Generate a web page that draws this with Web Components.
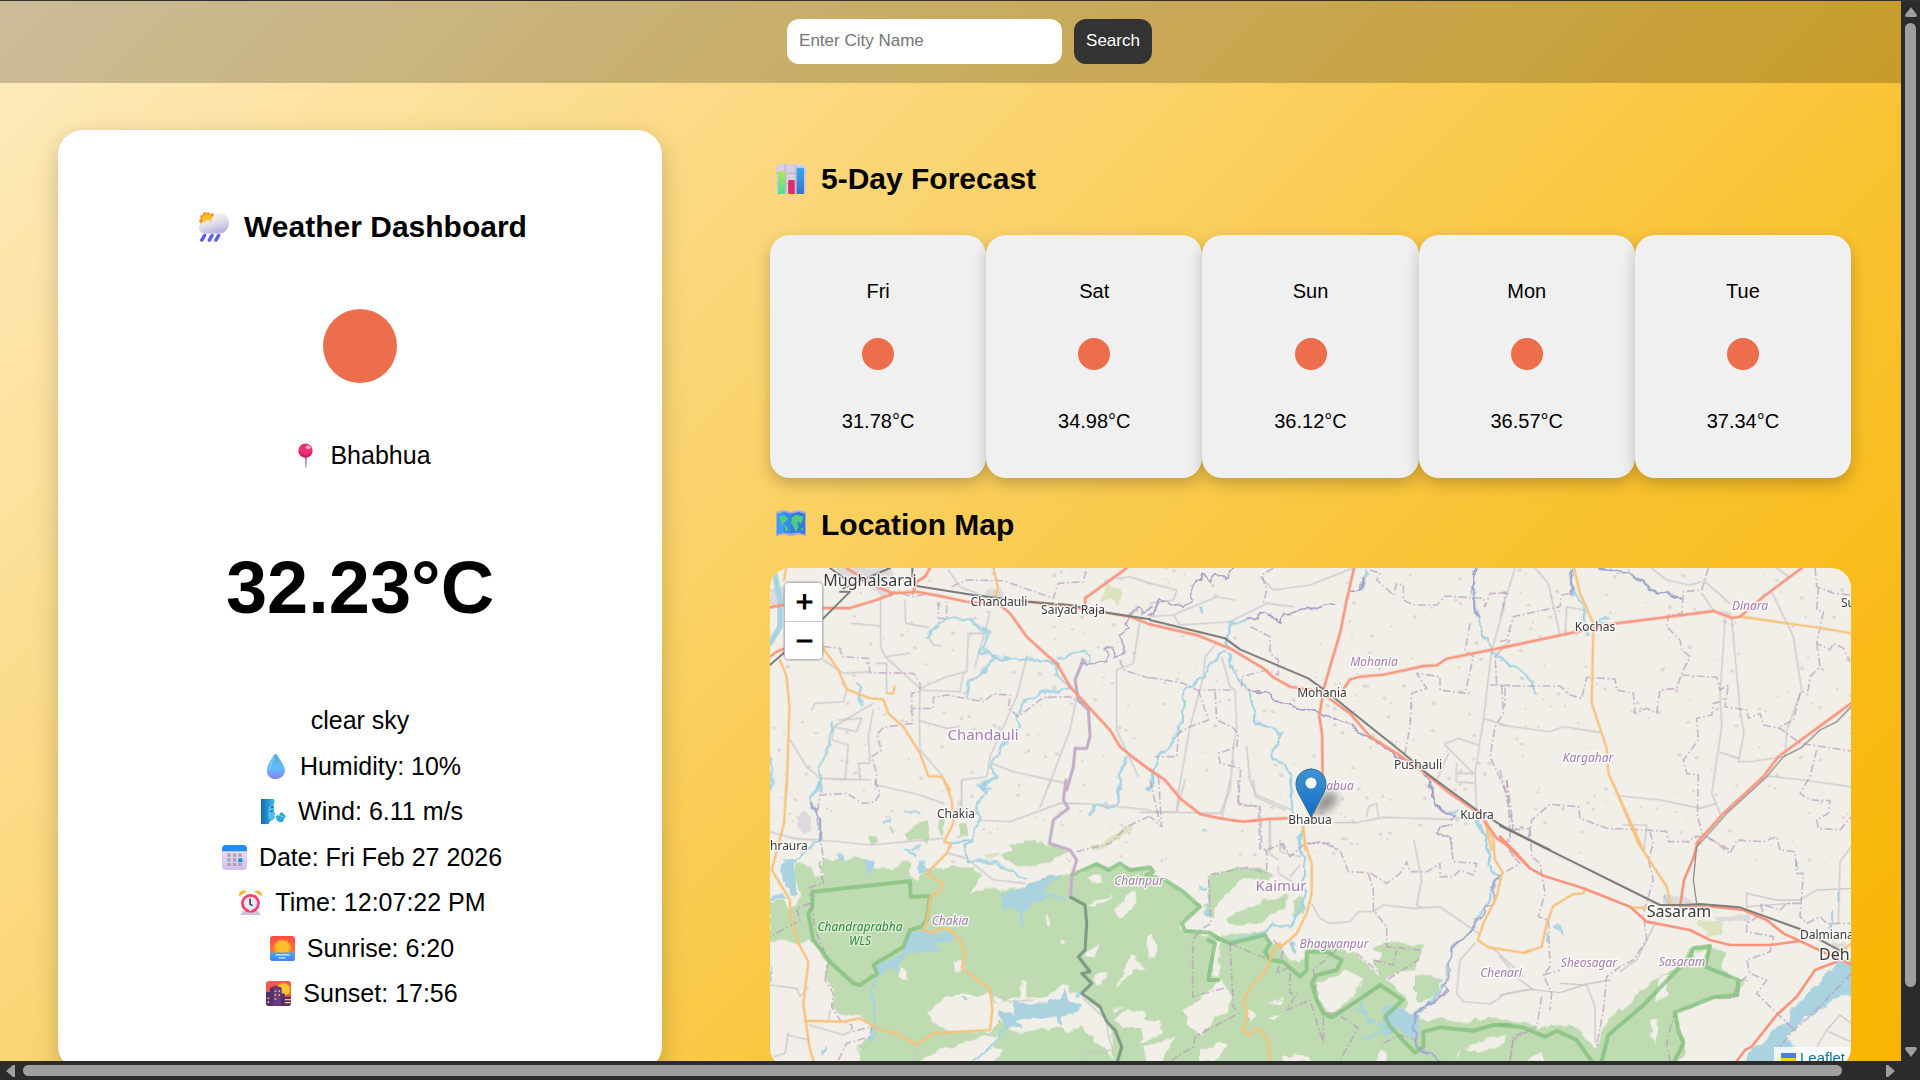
<!DOCTYPE html>
<html lang="en">
<head>
<meta charset="utf-8">
<title>Weather Dashboard</title>
<style>
  html, body { margin: 0; height: 100%; }
  body { font-family: "Liberation Sans", Arial, sans-serif; color: #000; overflow: hidden; }
</style>
</head>
<body>
<scroll-frame>
  <city-search></city-search>
  <weather-layout>
    <weather-card slot="side">
      <section-title slot="title" icon="rain">Weather Dashboard</section-title>
      <metric-row slot="place" icon="pin">Bhabhua</metric-row>
      <span slot="temp">32.23°C</span>
      <metric-row>clear sky</metric-row>
      <metric-row icon="drop">Humidity: 10%</metric-row>
      <metric-row icon="wind">Wind: 6.11 m/s</metric-row>
      <metric-row icon="calendar">Date: Fri Feb 27 2026</metric-row>
      <metric-row icon="clock">Time: 12:07:22 PM</metric-row>
      <metric-row icon="sunrise">Sunrise: 6:20</metric-row>
      <metric-row icon="sunset">Sunset: 17:56</metric-row>
    </weather-card>
    <section-title icon="chart">5-Day Forecast</section-title>
    <forecast-list>
      <forecast-day day="Fri">31.78°C</forecast-day>
      <forecast-day day="Sat">34.98°C</forecast-day>
      <forecast-day day="Sun">36.12°C</forecast-day>
      <forecast-day day="Mon">36.57°C</forecast-day>
      <forecast-day day="Tue">37.34°C</forecast-day>
    </forecast-list>
    <section-title class="map-title" icon="map">Location Map</section-title>
    <location-map></location-map>
  </weather-layout>
</scroll-frame>

<script>
const ICONS = {
  rain: `<defs><linearGradient id="c" x1="0" y1="0" x2="0.4" y2="1"><stop offset="0" stop-color="#fbfafc"/><stop offset=".6" stop-color="#e3e0e9"/><stop offset="1" stop-color="#bcb4e6"/></linearGradient></defs>
    <path d="M10 0l2 2 3-1 1 3 3 1-1 3-1 5H2L0 9l2-2-1-3 3-1 1-3 3 1z" fill="#fb8b24"/><circle cx="9" cy="8" r="6" fill="#fcc01f"/>
    <path d="M7 9c3-1 5 0 6 1 0-5 4-9 9-9s10 4 10 10-3 9-6 11c-2 1-4 1-6 1H7c-4 0-7-3-7-7 0-3 3-6 7-6z" fill="url(#c)"/><path d="M7 9c5 0 8 4 8 9" fill="none" stroke="#d8d5df"/>
    <path d="M6 25l-3 5M14 25l-3 5M21 25l-3 5" stroke="#575df3" stroke-width="3.6" stroke-linecap="round"/>`,
  pin: `<path d="M15 17h3l-1 15h-1z" fill="#9b8fa9"/><circle cx="16" cy="9.500" r="9" fill="#ee2f72"/><path d="M7 10a9 9 0 0 0 18 0c-3 6-12 8-18 0z" fill="#cc1c6b"/><ellipse cx="19.500" cy="5.500" rx="3" ry="2.500" fill="#ffb1cb"/>`,
  drop: `<defs><linearGradient id="d" x1="0" y1="0" x2="0" y2="1"><stop offset="0" stop-color="#58a8e4"/><stop offset=".55" stop-color="#5fbcf7"/><stop offset="1" stop-color="#8483f8"/></linearGradient></defs><path d="M16 0c1 0 2 1 3 3 4 7 9 12 9 18 0 7-6 11-12 11S5 28 5 21C5 15 9 10 13 3c1-2 2-3 3-3z" fill="url(#d)"/><path d="M14 5C11 11 8 15 8 20" fill="none" stroke="#9bdcff" stroke-width="2" stroke-linecap="round" opacity=".6"/>`,
  wind: `<defs><linearGradient id="w"><stop offset="0" stop-color="#1668ad"/><stop offset=".6" stop-color="#2e9fda"/><stop offset="1" stop-color="#4fc4f2"/></linearGradient></defs><path d="M0 0h16c2 1 2 5 0 8l1 5-1 3 3 3-2 2 1 3-3 3c-3 1-4 2-5 5H0z" fill="url(#w)"/><path d="M10 10c4-2 6-1 6 3l1 8-3 5c-3 1-5-1-5-4z" fill="#52bdf0"/><path d="M12 16l4-1M13 11l3-1" stroke="#164e83" stroke-width="1.500"/><path d="M19 22l2-2 2 2 1-4 3-1 3 3 2 2-2 3-2 4-4 1-4-3z" fill="#32a8d6"/><path d="M22 20l4 2 4 1" fill="none" stroke="#7fd9f2"/>`,
  calendar: `<defs><linearGradient id="k" x1="0" y1="0" x2="0" y2="1"><stop offset="0" stop-color="#ebe6f3"/><stop offset="1" stop-color="#d5bdea"/></linearGradient></defs><rect width="32" height="32" rx="5" fill="url(#k)"/><path d="M5 0h22a5 5 0 0 1 5 5v3H0V5a5 5 0 0 1 5-5z" fill="#268cf0"/><path d="M7 11h4v4H7zm7 0h4v4h-4zm7 0h4v4h-4zM7 17h4v4H7zm7 0h4v4h-4zM7 23h4v4H7zm7 0h4v4h-4zm7 0h4v4h-4z" fill="#a49fb0"/><path d="M21 17h5v5h-5z" fill="#0d93ec"/>`,
  clock: `<path d="M6 27h20l3 5H3z" fill="#cfc0df"/><path d="M2 8c-3-5 5-10 9-6zM30 8c3-5-5-10-9-6z" fill="#f9b52c"/><circle cx="16" cy="17" r="12" fill="#f33f6c"/><circle cx="16" cy="17" r="8.500" fill="#eee7f4"/><path d="M15.500 11v7l3 2" fill="none" stroke="#402f4e" stroke-width="2"/><path d="M15 25h2v2h-2z" fill="#fff"/>`,
  sunrise: `<defs><linearGradient id="s" x1="0" y1="0" x2="0" y2="1"><stop offset="0" stop-color="#ff493d"/><stop offset="1" stop-color="#ff8b57"/></linearGradient><linearGradient id="b" x1="0" y1="0" x2="0" y2="1"><stop offset="0" stop-color="#38aef4"/><stop offset="1" stop-color="#4f79f3"/></linearGradient></defs><rect width="32" height="32" rx="4" fill="url(#s)"/><path d="M16 4l3 2 3-1 1 3 3 1v4l2 2-3 6H7l-3-6 2-2V9l3-1 1-3 3 1z" fill="#fba61f"/><circle cx="16" cy="14" r="8" fill="#fbc02a"/><path d="M0 21h32v7a4 4 0 0 1-4 4H4a4 4 0 0 1-4-4z" fill="url(#b)"/><path d="M7 24h18M11 28h9" stroke="#d8ebff" stroke-width="1.600"/>`,
  sunset: `<rect width="32" height="32" rx="4" fill="#ea5a50"/><path d="M21 2l4 0 3 3 3 1v11H14l-1-8 3-5z" fill="#f9951f"/><circle cx="23" cy="11" r="7.500" fill="#fbc62b"/><path d="M0 14h5V9l7-3 8 3v7h4v4h8v8a4 4 0 0 1-4 4H4a4 4 0 0 1-4-4z" fill="#53306d"/><path d="M9 8h10v24H9z" fill="#653c7e"/><path d="M11 12h2v2h-2zm5 0h2v2h-2zm-5 5h2v2h-2zm5 0h2v2h-2zm-5 5h2v2h-2zM2 21h2v2H2zm0 5h2v2H2zM24 23h8v1.500h-8zm0 4h8v1.500h-8z" fill="#ffcf57"/>`,
  chart: `<rect width="32" height="32" rx="5" fill="#d8d0df"/><path d="M10 0v32M21 0v32M0 10h32M0 21h32" stroke="#beb4c7" stroke-width="1.200"/><defs><linearGradient id="g" x1="0" y1="0" x2="0" y2="1"><stop offset="0" stop-color="#aee65b"/><stop offset="1" stop-color="#58dc92"/></linearGradient><linearGradient id="u" x1="0" y1="0" x2="0" y2="1"><stop offset="0" stop-color="#35a9f6"/><stop offset="1" stop-color="#3c72c4"/></linearGradient></defs><path d="M2 9q0-1 1-1h5q2 0 2 1v23H2z" fill="url(#g)"/><path d="M13 18q0-1 1-1h4q2 0 2 1v14h-7z" fill="#e12c72"/><path d="M22 5q0-1 1-1h5q2 0 2 1v27h-8z" fill="url(#u)"/>`,
  map: `<path d="M0 2l8-2 8 2 8-2 8 2v26l-8-2-8 2-8-2-8 2z" fill="#b9a5cf"/><path d="M1 4l7-2 8 2v21l-8-1-7 2z" fill="#3f9cf3"/><path d="M16 4l8-2 7 2v22l-7-2-8 1z" fill="#2f7cda"/><path d="M8 2l8 2v21l-8-1z" fill="#338ae6"/><path d="M4 7l6-1 3 3-3 4-2 1 2 3 3 2-1 4-2-1-1-5-4-4zM17 8l4-3 8 2-1 5-2 3-2-3-1 3 1 4-3 4-2-5-3-4zM26 19l3 1-1 3z" fill="#52ca82"/>`
};
const icon = (name, size, gap) => name
  ? `<svg viewBox="0 0 32 32" width="${size}" height="${size}" style="margin:0 ${gap}px" aria-hidden="true">${ICONS[name]}</svg>` : '';

class BaseElement extends HTMLElement {
  connectedCallback() {
    if (this.shadowRoot) return;
    this.attachShadow({ mode: 'open' }).innerHTML = this.render();
  }
}

/* Window frame: page area plus the two scroll tracks. */
customElements.define('scroll-frame', class extends BaseElement {
  render() { return `<style>
    :host { display: grid; box-sizing: border-box; height: 100vh; grid-template: minmax(0, 1fr) 19px / minmax(0, 1fr) 19px; background: #2b2b2b; border-top: 1px solid #33302f; }
    .page { overflow: hidden; background: linear-gradient(135deg, #feebc0 0%, #fbd981 30%, #f9c437 66%, #f8b400 100%); }
    .v, .h { display: flex; align-items: center; justify-content: space-between; }
    .v { flex-direction: column; padding: 6px 0 4px; }
    .h { padding: 0 6px; }
    .thumb { background: #9f9f9f; border-radius: 6px; }
    .v .thumb { width: 11px; flex: 1; margin: 6px 0 60px; }
    .h .thumb { height: 11px; flex: 1; margin: 0 44px 0 8px; }
    svg { display: block; fill: #9f9f9f; }
    </style>
    <div class="page"><slot></slot></div>
    <div class="v"><svg width="12" height="10"><path d="M6 0l6 8q0 2-2 2H2q-2 0-2-2z"/></svg><div class="thumb"></div><svg width="12" height="10"><path d="M6 10l6-8q0-2-2-2H2q-2 0-2 2z"/></svg></div>
    <div class="h"><svg width="9" height="12"><path d="M0 6l7-6h2v12H7z"/></svg><div class="thumb"></div><svg width="9" height="12"><path d="M9 6L2 0H0v12h2z"/></svg></div>`; }
});

customElements.define('city-search', class extends BaseElement {
  render() { return `<style>
    :host { display: block; background: rgba(0,0,0,.2); }
    form { display: flex; justify-content: center; gap: 12px; margin: 0; padding: 18px 0 19px 38px; }
    input, button { box-sizing: border-box; height: 45px; border: 0; border-radius: 12px; font: 17px/20px "Liberation Sans", Arial, sans-serif; padding: 0 12px 2px; }
    input { width: 275px; background: #fff; outline: 0; }
    input::placeholder { color: #757575; opacity: 1; }
    button { background: #333; color: #fff; }
    </style>
    <form onsubmit="return false"><input type="text" aria-label="City name" placeholder="Enter City Name"><button type="submit">Search</button></form>`; }
});

customElements.define('weather-layout', class extends BaseElement {
  render() { return `<style>
    :host { display: grid; grid-template-columns: 604fr 1081fr; column-gap: 108px; padding: 47px 50px 40px 58px; align-items: start; }
    .main { min-width: 0; padding-top: 31px; }
    ::slotted(forecast-list) { margin: 38px 0 29px; }
    ::slotted(location-map) { margin-top: 25px; }
    </style><slot name="side"></slot><div class="main"><slot></slot></div>`; }
});

customElements.define('weather-card', class extends BaseElement {
  render() { return `<style>
    :host { display: flex; flex-direction: column; align-items: center; background: #fff; border-radius: 25px; padding: 79px 0 63px; box-shadow: 0 8px 25px rgba(0,0,0,.2); }
    .sun { width: 74px; height: 74px; border-radius: 50%; background: #ec6e4c; margin: 64px 0 58px; }
    .temp { font-size: 74px; line-height: 84px; font-weight: bold; margin: 76px 0; }
    .list { display: flex; flex-direction: column; justify-content: space-between; align-items: center; height: 302px; }
    </style><slot name="title"></slot><div class="sun"></div><slot name="place"></slot><div class="temp"><slot name="temp"></slot></div><div class="list"><slot></slot></div>`; }
});

customElements.define('section-title', class extends BaseElement {
  render() { return `<style>
    :host { display: block; }
    h2 { display: flex; align-items: center; gap: 9px; margin: 0; font-size: 30px; line-height: 36px; }
    svg { display: block; }
    </style><h2>${icon(this.getAttribute('icon'), 30, 6)}<span><slot></slot></span></h2>`; }
});

customElements.define('metric-row', class extends BaseElement {
  render() { return `<style>
    :host { display: flex; align-items: center; gap: 8px; font-size: 25px; line-height: 29px; }
    svg { display: block; }
    </style>${icon(this.getAttribute('icon'), 25, 4)}<span><slot></slot></span>`; }
});

customElements.define('forecast-list', class extends BaseElement {
  render() { return `<style>:host { display: flex; } ::slotted(*) { flex: 1; }</style><slot></slot>`; }
});

customElements.define('forecast-day', class extends BaseElement {
  render() { return `<style>
    :host { display: flex; flex-direction: column; align-items: center; padding: 44px 0 45px; background: #f0f0f0; border-radius: 20px; box-shadow: 0 6px 15px rgba(0,0,0,.22); font-size: 20px; line-height: 24px; }
    .sun { width: 32px; height: 32px; border-radius: 50%; background: #ec6e4c; margin: 35px 0 39px; }
    </style><span>${this.getAttribute('day')}</span><div class="sun"></div><span><slot></slot></span>`; }
});

/* Survey sheets: the map is drawn in six sheets, at three units to a pixel. */
const SHEET = { A: [-30, -234], B: [1140, -24], C: [2190, -24], D: [-30, 636], E: [1110, 636], F: [2190, 636] };
/* Layers whose outlines are broken up into natural shapes. */
const NATURAL = ['wood', 'land', 'lake', 'meadow', 'town', 'river', 'stream'];
const LAYERS = [
  ['town', {
    A: 'M220 234H390L400 290 370 320 330 290 290 270 240 260ZM30 300L70 290 75 340 30 350ZM675 310L720 290 730 340 690 350Z',
    D: 'M105 110L130 95 150 115 155 145 130 160 110 140ZM590 60L610 60 605 110 590 110Z',
    F: 'M490 350L560 345 590 370 540 380 490 380ZM640 410L700 405 750 400 745 425 700 415 650 425ZM1000 490L1035 480 1040 510 1010 520Z', C: 'M660 150L695 160 690 175 660 165Z' }],
  ['meadow', { A: 'M1040 285L1083 290 1083 340 1020 335Z', D: 'M670 225L720 215 715 230 680 237ZM990 200L1040 185 1080 150 1130 120 1110 150 1050 190 1000 215Z', F: 'M600 420L670 425 665 465 630 470 590 435Z' }],
  ['wood', {
    D: 'M190 240L230 235 290 232 320 245 345 262 380 268 430 250 450 248 452 290 470 300 500 270 530 262 560 262 640 262 660 290 630 345 690 320 720 330 790 325 830 300 900 285 950 280 1010 250 1050 265 1080 250 1110 270 1180 262 1160 290 1215 300 1270 335 1320 380 1265 430 1270 450 1375 470 1470 468 1515 465 1540 482 1560 500 1580 530 1620 550 1635 515 1680 475 1740 500 1780 520 1830 560 1860 590 1840 550 1860 530 1840 500 1900 485 1990 500 1970 570 1910 575 1880 600 1900 620 1940 660 1930 690 1980 720 2040 715 2080 725 2140 720 2220 715 2320 740 2340 755 2370 730 2450 745 2480 770 2500 800 2520 790 2525 740 2570 690 2600 680 2640 625 2720 580 2790 505 2850 490 2860 510 2888 515 2888 570 2920 595 2960 595 2935 650 2860 655 2780 690 2750 695 2755 740 2775 780 2770 820 2740 870 310 870 290 795 340 770 330 735 300 710 240 700 215 680 225 635 195 590 205 545 180 510 150 480 110 490 30 480 30 370 70 350 90 390 110 370 130 340 110 300 105 250 150 260 160 285 185 290ZM440 165L470 130 500 120 505 150 500 185 445 180ZM330 165H355V190H330ZM535 120L555 105 550 165 535 160ZM600 130L620 125 620 165 600 170ZM720 225L760 205 740 190 790 190 820 180 900 200 930 215 870 240 800 265 750 250ZM390 135L400 160 390 165Z',
    E: 'M825 590L870 585 905 600 895 640 860 660 825 670ZM205 290L300 262 340 262 380 270 400 290 370 300 330 290 280 320 240 360 220 410 200 400ZM265 410L350 370 440 340 435 380 350 430 270 435ZM460 360L490 350 490 400 460 410ZM250 470L380 455 380 480 250 490Z' }],
  ['land', {
    D: 'M500 700L560 650 600 640 650 645 690 640 700 665 718 660 720 720 690 755 600 755 550 745 520 730ZM700 640L730 665 780 655 785 600 795 598 800 650 860 655 900 620 925 615 930 640 965 640 968 690 900 740 760 760 710 720ZM860 400L875 430 860 440ZM895 475L920 485 900 490ZM580 545L605 540 610 570 590 575ZM410 590L430 560 445 600ZM980 290L1020 275 1030 310 995 315ZM980 375L1060 340 1030 370 1000 380ZM1060 390L1130 330 1130 350 1100 400 1080 415ZM975 520L1020 490 1000 530ZM1000 590L1045 570 1040 600 1015 620ZM1055 640L1095 580 1110 520 1160 570 1120 570ZM1055 690L1095 675 1060 700ZM440 870L500 830 600 790 720 760 700 800 730 810 690 870ZM965 640L1030 690 1050 740 1060 840 1020 800 960 740 920 760 900 740ZM1060 720L1100 690 1160 700 1140 750 1090 740Z',
    E: 'M15 470L35 460 55 500 45 540 20 530ZM222 490L240 475 238 590 210 590 225 560ZM130 690L200 640 240 600 275 640 270 700 220 720 190 770 150 740ZM0 725L60 720 70 760 0 790ZM10 800L100 770 70 840 20 850ZM180 810L240 780 260 800 220 850 180 840ZM320 690L350 705 325 720ZM390 670L430 650 420 670ZM380 710L420 705 400 720ZM430 825L510 830 510 850 430 850ZM530 605L560 600 620 570 670 600 640 650 570 700 540 660ZM715 815L740 810 735 850 710 850ZM750 600L820 575 825 690 800 655ZM945 830L955 800 950 850ZM970 800L1100 765 1090 790 1020 820ZM1160 840L1200 820 1220 850Z',
    F: 'M470 600L510 580 500 640 475 670ZM450 720L470 710 470 790 455 770ZM580 515L620 505 610 540 590 530ZM0 770L20 770 10 790Z' }],
  ['lake', {
    D: 'M65 250L100 240 108 300 115 340 100 350 80 320 60 270ZM30 350L70 335 80 345 30 365ZM460 450L500 445 520 465 560 455 590 475 560 485 520 490 550 520 500 512 450 520 420 550 415 580 395 555 370 580 365 600 350 570 350 560 400 535 430 515 440 480ZM720 340L790 325 830 300 900 285 870 320 850 340 930 355 870 355 820 370 790 400 785 445 780 395 750 375 735 400 730 365ZM720 690L765 700 760 665 860 675 900 650 910 635 930 660 965 680 940 700 910 710 905 740 890 710 850 710 800 715 770 720 785 750 750 740 730 745ZM310 235L340 240 345 270 325 280ZM225 228L240 218 255 235 235 240ZM475 240L500 240 490 270 515 265 495 285 475 280ZM600 650L630 665 610 665ZM30 545L40 600 30 600Z',
    E: 'M735 680L770 680 835 705 835 760 815 780 770 740 740 770 720 755 730 720ZM450 478L465 490 465 515 455 515Z',
    F: 'M1100 520L1015 540 980 580 950 620 880 680 870 720 830 740 790 780 720 855 840 870 885 800 860 770 920 710 990 670 1020 645 1100 645Z' }],
  ['minor', {
    A: 'M362 330V470L375 500 480 595 478 690 480 780 550 860M275 400L360 408M435 330L437 400 505 412M375 500L450 490M480 595L560 560 620 545 625 430 680 430M480 600L600 605 610 550M480 692L560 715 600 710M690 365L670 440 645 530M800 500L770 620 690 800 680 860 605 870V900M695 820L760 845 920 880M950 620L930 720 865 890M1140 390L1120 520 1070 540V720L1135 860M190 510L250 550 330 545M155 660L165 640 250 635 260 600M340 640L220 710 215 750 265 765 255 870 180 865M90 750L140 830 180 865 330 870M220 710L290 725 305 685 235 690M350 520H380V610M340 660L325 740 330 820 295 820 300 870M505 440L520 465 545 467M565 240L600 290 700 330M1070 265L1110 260 1170 280',
    B: 'M0 70L80 90 70 120 0 130M330 50L370 90 480 75 610 24M0 170L70 165 90 195 240 185 350 130 430 140M70 165L200 110 255 120M200 250L165 290 160 350 120 500 85 700 80 755M0 755L210 760 240 690 250 560 260 500 255 390 240 380 215 290M290 560L300 660 320 705 425 750M555 788L620 788 700 772 900 778 950 770M980 750L975 640 1000 480 1025 270 1060 150M1000 475L1080 500M885 555L970 640M885 550L925 535 985 555M920 610L918 665 970 670M920 640L970 640M650 770L655 740 680 730 685 770M360 780L362 870M860 660L895 580',
    C: 'M45 24L0 170M105 24L145 70 180 225M455 24L500 60 570 75 605 65M610 60L690 130M605 100L640 150M675 175L665 330 660 390 665 500 650 600 635 700 660 760M695 175L720 450 732 520 715 605M655 575L715 595M715 605L750 605 850 590M830 24L865 50M815 95L880 230 905 390 860 510 855 590M0 495L150 515 190 500 300 517M360 708L480 720 600 745 650 730M800 648L910 660 1053 680M370 795L440 795 432 870M195 220L200 140 250 150',
    D: 'M30 155L100 175 240 185 330 195 550 175M350 15L480 45 550 70M605 0V75M655 120L750 125 900 70 1000 72 1170 90M840 82L870 5M565 220L620 235 700 300 795 310M30 615L110 625 120 650 145 620M690 640L750 665 820 660M148 735L250 765 270 755M205 725L210 690M85 760L75 820 40 830M80 765L148 780M970 655L1040 720 1045 770 1060 810 970 820 965 843M460 840L475 795',
    E: 'M0 97L110 95 135 0M245 115L270 0M340 0L345 50 435 90M388 120V220L415 240M420 180V215L480 230M415 260V280L465 310M450 290L480 255M515 372L540 415 570 430 630 425 655 395 700 395 730 375 820 385 900 380 1015 460M822 180L845 300 830 375 850 385M1005 490L960 540 950 640 970 665 1050 672 1100 640 1170 628M1060 505L1150 590',
    F: 'M0 530L60 600 100 628M0 645L90 628 180 638 260 612 330 600M180 610L260 615 285 680 285 780 310 820M465 430L410 540 360 575M740 340L830 360 900 360 950 330 1053 325M740 338V380L870 370M1053 200L1020 245 1015 430M945 810L980 750 1020 705 1053 730M985 755L1053 785' }],
  ['river', {
    A: 'M500 445L515 420 560 390 620 390 690 425 680 450 660 480 700 500 780 510 830 505 890 520 885 550 930 590M890 505L940 490 980 485 985 520M620 620L630 580 670 550 700 500M930 595L850 605 790 640 770 690 780 710 740 760 705 800 690 830 710 860 655 885 690 900M290 580L303 590 303 645M215 700L205 780 180 830 178 900M1100 800L1075 860V900M30 800L40 850 30 900',
    B: 'M235 195L235 260M225 270L180 310 160 350 100 390 95 490 60 560 20 590 5 660M235 280L270 370 300 390 320 490 395 520 365 590 415 630 425 760M975 24L970 90 985 190 1020 270 1080 320M300 180L240 195M150 140L157 160M980 780L1020 870M455 800L450 870M650 30L635 90',
    C: 'M210 24L215 90 255 140 262 230M300 24L400 45 460 95 540 110M0 300L85 340 105 395M325 175H300V190H320',
    D: 'M180 0L155 70 180 120 180 180 130 215 110 245 70 240M690 0L660 20 680 40 655 70 655 120 640 180 580 190M640 180L610 200 620 240 700 245 760 280 795 300M1075 0V75L1000 80 990 100M350 590L335 640 345 720 335 780M730 745L700 790 645 840M435 100H480M440 205L465 228M950 650L965 640M480 200L460 210M190 800V815M375 125L390 118',
    E: 'M25 30L40 0M452 0L455 90M488 140L475 180 490 240 495 350 450 450 400 430 370 460 270 485M860 0L890 80 920 100 950 95M1020 130L1045 200 1050 270 1080 285 1060 310 1035 380 1000 440 935 510 910 620 870 670 830 700 820 740 835 810 910 843M650 690L700 730 740 740M660 780L740 750M670 670V700M180 325H195M192 378H203M195 397H210M190 157H200',
    F: 'M165 437L186 452M145 460V490M890 245L893 265M1000 400L990 450M1010 340V370M500 350L505 375' }],
  ['canal', { A: 'M40 234L60 330 60 410 30 460' }],
  ['bound', {
    A: 'M190 470L240 475 245 500 325 505 330 548 460 550 480 580 480 605 455 610 455 655 520 655 520 622 560 615 670 635 700 612 750 615 745 655 775 680 850 622 930 620 980 650M455 655L458 700 370 712 350 735 365 780 335 800 350 850 345 900M575 290L620 270 730 272 880 325 895 280 970 275 980 234M535 335V385H560V335M1080 510L1090 540 1170 565M390 320L400 305 460 320 510 310',
    B: 'M0 352L100 370 140 390 250 390M275 380L275 350 350 330 385 345 385 300 360 280 360 230 300 200M370 24L335 45 350 90 340 130M195 395L200 480 245 500 265 520 260 560 205 580 210 610 272 625 265 730 325 740 330 870M145 390L175 480 120 500 85 520 80 590 15 590M660 30L690 40 680 60 730 105 740 70 760 75 760 120 790 135 860 135 885 108 1000 115 1005 140 1020 100 1075 100M960 190L945 270 970 290 945 400 870 390 870 350 800 340 830 385 785 400 780 500 765 580M1020 375H1080M1055 380L1060 460 1035 500 1020 590 1080 720M25 650L35 800 0 770M1040 370L1035 290 1080 240M405 870L390 850M470 850L540 850 560 870M905 870V830L860 825 870 800 900 795',
    C: 'M0 245L20 240 40 170 130 150 180 140 185 105 215 100M0 100L15 95 10 150M625 24L605 90 550 95 545 160 505 165 500 200 540 240 545 270 570 290 545 340 530 385 480 390 470 460 440 445 405 460 400 400 350 390 345 357 260 352 245 415 210 405 180 378 0 378M545 345L650 352 660 390 685 375 675 440 740 450 745 475 780 460 790 495 840 505 900 550 1053 573M660 425L640 430 635 465 590 475 595 540 550 600 560 640 595 645 592 770 610 830M945 24L950 80 1000 100 1053 105M955 80L950 150 970 155 950 250 990 270 1000 250 1030 265 1050 305M950 250L960 320 930 350 925 390 900 400 880 480 840 500M950 570L930 650 900 700 930 720 990 722 985 760 950 780 955 805 1020 810 1053 770M0 630L35 780 40 810 90 805M85 835L95 780 150 733 235 740 240 775 320 805 440 810 500 815 505 845 570 845 580 830 620 830 690 870M15 385V440',
    D: 'M345 0L360 40 345 65 310 70 260 40 180 45 170 110 185 200 190 235 178 250 190 310 140 325M235 840L260 790 330 770 335 740 275 755 275 735 240 720 215 680 220 640 195 600 205 545 165 450 150 340M150 370L110 385 120 420 30 470M950 215L1050 190 1100 140 1170 108',
    E: 'M295 0V75L360 80 365 200 380 215 380 280 320 262 205 285 213 430 180 450 158 480 158 650 270 620M270 490L280 680 295 700 165 770 160 800 95 840M30 0L60 130M380 210L430 190 450 230 490 195 540 185 600 210 625 275 690 278 740 310 780 280 800 245 810 275 860 275 900 250 900 290 940 290 960 270 1000 285 1010 250 940 245 930 170 890 160 900 140 935 135V115M685 280L700 330 700 390 740 440 740 500 840 510 835 540 740 600M700 540L760 555 770 510M650 520L720 580M400 480L430 510 410 580 450 560 450 640 470 640 440 690 510 660 550 790 550 700 590 700 655 745 600 840M590 510L520 570 530 660 550 700M270 490L340 520 380 535M590 700L720 620M730 790L780 765 830 780M1100 0L1110 150 1150 140M1110 150L1110 220 1140 250 1080 285M1170 750L1120 780 1110 843',
    F: 'M20 0L40 140 20 190 40 230M90 145L95 230 120 250 135 340 115 410 145 420 150 560 130 585 155 640 150 690M125 650L110 740 40 770 30 840M450 155L460 190 445 240 460 300 430 400 440 480 400 540 360 560 320 590 310 690 290 800M620 170L650 190 690 220 710 180 790 185 830 170 840 210 885 215 890 280 910 280 900 410 920 430 960 410 980 430 1050 430M900 370L860 370 840 390 780 370 790 400 740 430 740 455 820 470 810 515 740 540 750 580 800 600 770 640 820 690 890 755M1053 580L940 700 880 750 840 800M740 590L710 610 700 655 640 652M525 690L500 790 510 843M130 585L180 570' }],
  ['reserve', {
    D: 'M157 335L450 303 452 350 510 348 500 420 485 440 450 450 430 500 340 555 352 580 300 615 280 610 210 545 160 480 145 400 157 380ZM935 285L1010 252 1045 270 1080 250 1110 270 1170 262 1180 275 1160 285 1215 300 1270 335 1320 380 1265 430 1275 452 1350 458 1375 475',
    E: 'M205 480L225 490 215 540 205 600 235 600M235 475L270 490 375 465 390 490 375 515 390 540 430 545 480 590 500 570 500 515 560 515 605 540 590 570 530 585 515 610 530 660 550 700 575 712 640 670 720 615 788 660 735 710 750 740 825 818 850 800 850 755 900 742 1000 752 1060 735 1110 735',
    F: 'M0 735L70 742 135 770 170 752 230 780 275 843M305 843L325 765 430 675 570 530 580 505 630 498 615 560 715 600 712 645 640 652 525 697 535 750 550 790 520 850' }],
  ['state', { A: 'M965 520L945 570 955 630 985 660 990 740 980 775 945 775 940 830 920 900', D: 'M918 0L910 60 925 85 880 120 868 190 930 210 950 240 935 290 932 350' }],
  ['stream', { A: 'M1170 350L1150 370 1130 350 1095 400 1110 410 1080 440 1095 490 1060 500 1060 475 1035 480 1040 510 980 525 965 515',
    B: 'M250 24L225 55 200 40 180 65 160 40 130 80 125 120 100 145 30 120 0 165M640 50L635 90 600 95M550 130L480 150 400 160 395 190 350 160 330 155 320 180 290 180M300 385L350 400 400 430 500 455 600 490 660 540 720 570 760 600M820 640L850 720 880 760 920 765M975 24L970 90 980 180',
    C: 'M210 24L215 100M300 24L400 45 460 95 540 110', D: 'M155 70L180 120 180 180',
    E: 'M860 0L890 80 920 100M1080 285L1060 310 1060 370 1035 380 1035 400 1000 440 935 510 930 570 910 620 925 630 870 670 830 700 820 740 835 810 910 843' }],
  ['ridge', { D: 'M932 352L975 375 980 430 975 510 955 530 990 575 965 580 995 610 965 640 1020 680 1040 725 1065 750 1085 800 1065 870' }],
  ['second', {
    A: 'M78 234L72 270M190 475L235 540 260 598 330 625 370 628 385 670 430 710 480 790 505 858 545 860 570 900M60 510L80 560 88 650 80 900M700 234L713 290 705 330M403 590L400 610 382 610',
    B: 'M460 800L466 870M1005 785L1025 870', C: 'M222 24L240 100 280 190 275 430 320 565 325 640 430 870M725 170L860 190 970 205 1053 220',
    D: 'M80 0L72 130 35 270 90 360 90 400 115 490 145 545 130 670 148 800 160 843M552 0L575 60 580 130 552 185 572 190 560 220 500 280 548 310 535 340 512 348 500 425 487 450 520 460 540 445 570 450 600 480 615 520 605 565 660 605 690 625 697 690 690 750 600 755 520 760 470 795 410 760 360 750 300 715 250 725 135 722',
    E: 'M488 140L495 190 515 250 515 340 500 400 470 460 430 495 400 510 380 570 340 610 310 660 322 700 308 755 330 765 355 745 385 780 390 843M1038 125L1060 180 1065 240 1087 275 1070 350 1030 430 1013 480 1045 502 1150 518 1170 510M410 500L420 490 425 500Z',
    F: 'M335 0L415 190 500 320 512 375M75 518L125 500 140 430 160 378 220 342 250 340 255 325M400 383H440M515 375H540M1055 490L1030 510' }],
  ['trunk', {
    A: 'M30 352L100 340 188 354 270 354 350 330 400 310 470 305 540 318 620 335 720 345 750 370 800 440 860 495 890 520 930 590 985 650 1050 720 1080 770 1110 795 1170 840M805 335L930 350 1040 368 1110 380 1170 403M260 234L350 290 400 310M510 234L495 260 470 275 457 310M1100 234L975 325V345M30 500L50 485 75 475',
    B: 'M0 193L140 225 240 265 340 325 370 352 420 380 500 392M612 24L590 120 570 220 540 320 520 390 508 470 516 520 518 660 490 760M575 395L600 358 630 350 700 344 820 318 860 316 890 296 1080 258M530 410L600 460 660 530 740 580 820 635 900 700 980 755 1005 785 1040 835 1080 862M0 630L45 660 90 715 150 762 210 775 280 785 350 777 410 775',
    C: 'M0 264L180 226 350 190 640 153 695 174 720 170 790 110 905 24M1053 430L930 520 835 590 790 650 670 760 590 850',
    F: 'M0 170L50 220 90 265 130 287 250 325 390 380 440 425 570 450 630 480 690 495 810 495 900 483M540 378L640 380 730 390 800 420 850 460 900 483 1010 535 1060 555M600 180L592 190 580 235 552 300 540 380M1010 545L945 570 890 650 830 705 755 800 735 810 710 843',
    E: 'M1080 170L1100 195 1170 265' }],
  ['rail', {
    A: 'M30 525L190 385 270 305M240 305L270 305M250 295L390 234M210 234L260 270M457 234V260M470 288L640 315 805 335 930 345 1040 368 1170 388',
    B: 'M0 180L225 235 270 268 475 355 530 395 760 580 830 640 980 750 1080 812', C: 'M0 795L150 870',
    F: 'M0 137L480 375 550 375 600 372 720 382 900 447 980 490 1020 512' }],
  ['rail thin', { C: 'M1053 440L1010 485 960 510 905 562 850 590 800 650 680 760 600 850', F: 'M600 190L590 200 580 300 590 370' }]
];
const LABELS = [
  ['town16', 'A', 331, 287, 'Mughalsarai'], ['town12', 'A', 716, 347, 'Chandauli'], ['town12', 'A', 938, 371, 'Saiyad Raja'],
  ['area15', 'A', 670, 751, 'Chandauli'], ['area12', 'B', 671, 317, 'Mohania'], ['town12', 'B', 515, 412, 'Mohania'],
  ['town12', 'B', 803, 626, 'Pushauli'], ['area12', 'B', 548, 689, 'Bhabua'], ['town12', 'B', 481, 792, 'Bhabua'], ['town12', 'B', 980, 778, 'Kudra'],
  ['area12', 'C', 750, 151, 'Dinara'], ['town12', 'C', 285, 214, 'Kochas'], ['area12', 'C', 263, 607, 'Kargahar'],
  ['town12', 'D', 587, 113, 'Chakia'], ['area12', 'D', 570, 436, 'Chakia'],
  ['park12', 'D', 301, 452, 'Chandraprabha'], ['park12', 'D', 301, 496, 'WLS'], ['area12', 'D', 1136, 315, 'Chainpur'],
  ['area15', 'E', 422, 334, 'Kaimur'], ['area12', 'E', 582, 503, 'Bhagwanpur'], ['area12', 'E', 1082, 590, 'Chenari'],
  ['town16', 'F', 538, 411, 'Sasaram'], ['area12', 'F', 268, 560, 'Sheosagar'], ['area12', 'F', 547, 559, 'Sasaram'],
  /* Names that run over the edge of the sheet start at a fixed point. */
  ['town12 start', 'D', 30, 209, 'hraura'], ['town12 start', 'C', 1023, 140, 'Su'],
  ['town12 start', 'F', 900, 478, 'Dalmiana'], ['town16 start', 'F', 957, 539, 'Deh']
];

customElements.define('location-map', class extends BaseElement {
  render() {
    const layers = LAYERS.map(([cls, sheets]) => `<g class="${cls}"${NATURAL.includes(cls) ? ' filter="url(#rough)"' : ''}>` + Object.entries(sheets)
      .map(([k, d]) => `<path transform="translate(${SHEET[k]})" d="${d}"/>`).join('') + '</g>').join('');
    let seed = 7, specks = '';
    const rnd = n => (seed = seed * 16807 % 2147483647) % n;
    for (let i = 0; i < 480; i++) {
      const x = rnd(3243), y = rnd(880), s = 4 + rnd(8);
      specks += `M${x} ${y}l${s} ${-s / 2} ${s / 2} ${s}-${s} 2z`;
    }
    const labels = LABELS.map(([cls, k, x, y, t]) =>
      `<text class="${cls}" x="${Math.round((SHEET[k][0] + x) / 3)}" y="${Math.round((SHEET[k][1] + y) / 3)}">${t}</text>`).join('');
    return `<style>
    :host { display: block; position: relative; height: 500px; border-radius: 20px; overflow: hidden; background: #f2efe9; }
    .sheet { display: block; width: 100%; height: 100%; }
    path { fill: none; stroke-linejoin: round; stroke-linecap: round; }
    .speck { fill: #dbdad9; }
    .town path { fill: #dcdada; } .meadow path { fill: #dbe2bd; }
    .wood path { fill: #bfdbb1; } .land path { fill: #f2efe9; } .lake path { fill: #aad3df; }
    .minor path { stroke: #c8c9ca; stroke-width: 4; }
    .river path { stroke: #a4d3e1; stroke-width: 7; } .canal path { stroke: #a4d3e1; stroke-width: 16; }
    .stream path { stroke: #a99fc4; stroke-width: 5; }
    .bound path { stroke: #b796bd; stroke-width: 5; stroke-dasharray: 24 8 5 8; stroke-linecap: butt; opacity: .65; }
    .state path { stroke: #c3acc9; stroke-width: 9; } .ridge path { stroke: #7b9a83; stroke-width: 9; }
    .reserve path { stroke: #82bf7e; stroke-width: 12; opacity: .75; }
    .second path { stroke: #f6c27b; stroke-width: 7; } .trunk path { stroke: #f9957d; stroke-width: 8; }
    .rail path { stroke: #7b7b79; stroke-width: 6; } .thin path { stroke: #8f8f8d; stroke-width: 4; }
    text { font-family: "Noto Sans", sans-serif; font-size: 12px; text-anchor: middle; paint-order: stroke; stroke: rgba(255,255,255,.75); stroke-width: 3px; stroke-linejoin: round; fill: #3a3a3a; }
    .town16 { font-size: 16px; }
    .area15, .area12 { fill: #a77cae; } .area15 { font-size: 15px; } .area12, .park12 { font-style: italic; }
    .park12 { fill: #2e8f3d; stroke: rgba(255,255,255,.4); } .start { text-anchor: start; }
    .marker { position: absolute; left: 50%; top: 200px; margin-left: -16px; }
    .zoom { position: absolute; left: 14px; top: 14px; display: flex; flex-direction: column; border: 1px solid #bbb9b6; border-radius: 5px; box-shadow: 0 0 1px 1px rgba(0,0,0,.15); overflow: hidden; }
    .zoom button { width: 37px; height: 38px; border: 0; padding: 0 0 0 2px; background: #fff; display: grid; place-items: center; font: 30px/30px "Liberation Sans", sans-serif; color: #000; -webkit-text-stroke: 1px #000; }
    .zoom button + button { border-top: 1px solid #ccc; }
    .credit { position: absolute; right: 0; bottom: 0; padding: 0 6px 0 7px; background: rgba(255,255,255,.8); font-size: 15px; line-height: 21px; }
    .credit a { display: flex; align-items: center; gap: 4px; color: #0078a8; text-decoration: none; }
    </style>
    <svg class="sheet" viewBox="0 0 1081 500" preserveAspectRatio="xMidYMid slice" role="img" aria-label="Map around Bhabua">
      <defs><filter id="rough" filterUnits="userSpaceOnUse" x="0" y="0" width="3243" height="1500"><feTurbulence type="fractalNoise" baseFrequency=".028" numOctaves="2" seed="4"/><feDisplacementMap in="SourceGraphic" scale="28" xChannelSelector="R" yChannelSelector="G"/></filter></defs>
      <g transform="scale(.33334)"><path class="speck" d="${specks}"/>${layers}</g>
      ${labels}
    </svg>
    <svg class="marker" width="60" height="52" viewBox="0 0 60 52" aria-hidden="true">
      <defs><linearGradient id="m" x1="0" y1="0" x2="0" y2="1"><stop offset="0" stop-color="#4193cf"/><stop offset="1" stop-color="#126fc6"/></linearGradient><filter id="bl" x="-50%" y="-50%" width="200%" height="200%"><feGaussianBlur stdDeviation="4"/></filter></defs>
      <path d="M17 49L24 30Q36 20 42 27 45 34 34 42Z" style="fill:#000" opacity=".38" filter="url(#bl)"/>
      <path d="M16 1C7 1 1 8 1 16c0 5 2 9 5 14l10 19 10-19c3-5 5-9 5-14C31 8 25 1 16 1z" style="fill:url(#m);stroke:#2e6c97"/><circle cx="16" cy="15" r="5.500" fill="#fff"/>
    </svg>
    <div class="zoom"><button type="button" aria-label="Zoom in">+</button><button type="button" aria-label="Zoom out">−</button></div>
    <div class="credit"><a href="#leaflet"><svg width="15" height="10"><rect width="15" height="5" fill="#4c7be1"/><rect y="5" width="15" height="5" fill="#ffd500"/></svg>Leaflet</a></div>`;
  }
});
</script>
</body>
</html>
